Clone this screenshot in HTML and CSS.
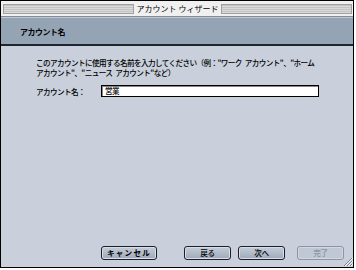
FILE: index.html
```html
<!DOCTYPE html>
<html lang="ja">
<head>
<meta charset="utf-8">
<link rel="stylesheet" href="styles.css">
</head>
<body>
<div class="window">
  <div class="titlebar">
    <div class="stripes"></div>
    <div class="title">アカウント ウィザード</div>
    <div class="stripes"></div>
  </div>
  <div class="header">アカウント名</div>
  <div class="content">
    <p class="desc">このアカウントに使用する名前を入力してください（例："ワーク アカウント"、"ホーム<br>アカウント"、"ニュース アカウント"など）</p>
    <div class="field">
      <span class="label">アカウント名：</span>
      <div class="input">営業</div>
    </div>
  </div>
  <div class="footer">
    <div class="btn cancel">キャンセル</div>
    <div class="btn back">戻る</div>
    <div class="btn next">次へ</div>
    <div class="btn done disabled">完了</div>
    <svg class="grip" width="10" height="10" viewBox="0 0 10 10">
      <path d="M9 1 L1 9 M9 4 L4 9 M9 7 L7 9" stroke="#7a8290" stroke-width="1"/>
      <path d="M10 1 L2 9 M10 4 L5 9 M10 7 L8 9" stroke="#ffffff" stroke-width="0.8"/>
    </svg>
  </div>
</div>
</body>
</html>
```
FILE: styles.css
```css
html, body {
  margin: 0;
  padding: 0;
  background: #ffffff;
}
body {
  font-family: "Noto Sans CJK JP", "Noto Sans", sans-serif;
  font-size: 7.6px;
  letter-spacing: -0.6px;
  font-weight: 500;
  color: #000;
}
.window {
  width: 354px;
  height: 268px;
  box-sizing: border-box;
  border: 1px solid #000;
  background: #c9d0dc;
  display: flex;
  flex-direction: column;
}
.titlebar {
  height: 15px;
  background: #f0f0f0;
  display: flex;
  align-items: center;
  padding: 0 1px 0 2px;
  border-bottom: 1px solid #8a8a8a;
}
.stripes {
  flex: 1;
  height: 10px;
  background: repeating-linear-gradient(to bottom, #c4c4c4 0px, #c4c4c4 1px, #dadada 1px, #dadada 2px);
  border: 1px solid #a0a0a0;
  box-sizing: border-box;
}
.title {
  padding: 0 3px;
  line-height: 12px;
  font-size: 8px;
  letter-spacing: 0;
  font-weight: 400;
}
.header {
  height: 26px;
  background: #95a4b4;
  border-top: 1px solid #b8c8e0;
  border-bottom: 2px solid #1c2630;
  font-weight: bold;
  font-size: 8px;
  letter-spacing: -0.5px;
  padding-left: 19px;
  display: flex;
  align-items: center;
}
.content {
  padding: 12px 0 0 35px;
}
.desc {
  margin: 0;
  line-height: 10px;
  word-spacing: 2px;
}
.field {
  display: flex;
  align-items: center;
  margin-top: 7px;
}
.label {
  width: 65px;
}
.input {
  width: 218px;
  height: 12px;
  box-sizing: border-box;
  background: #fff;
  border: 1px solid #000;
  box-shadow: inset 1px 1px 0 #888;
  line-height: 10px;
  padding-left: 3px;
}
.footer {
  margin-top: auto;
  display: flex;
  align-items: flex-end;
  padding: 0 0 7px 100px;
  position: relative;
}
.btn {
  height: 14px;
  box-sizing: border-box;
  border: 1px solid #1e1e28;
  border-radius: 3px;
  background: linear-gradient(to bottom, #c4ccd8, #9eaaba);
  box-shadow: inset 0 0 0 1px #d8dee8;
  display: flex;
  align-items: center;
  justify-content: center;
  line-height: 12px;
  letter-spacing: -0.3px;
}
.cancel { width: 56px; margin-right: 27px; letter-spacing: 1.2px; font-weight: bold; }
.back { width: 47px; margin-right: 7px; }
.next { width: 47px; margin-right: 12px; }
.done { width: 47px; }
.disabled {
  border-color: #8a94a4;
  color: #8a94a4;
  background: #c0c8d4;
  box-shadow: inset 0 0 0 1px #d2d8e2;
}
.grip {
  position: absolute;
  right: 0;
  bottom: 0;
}
```
